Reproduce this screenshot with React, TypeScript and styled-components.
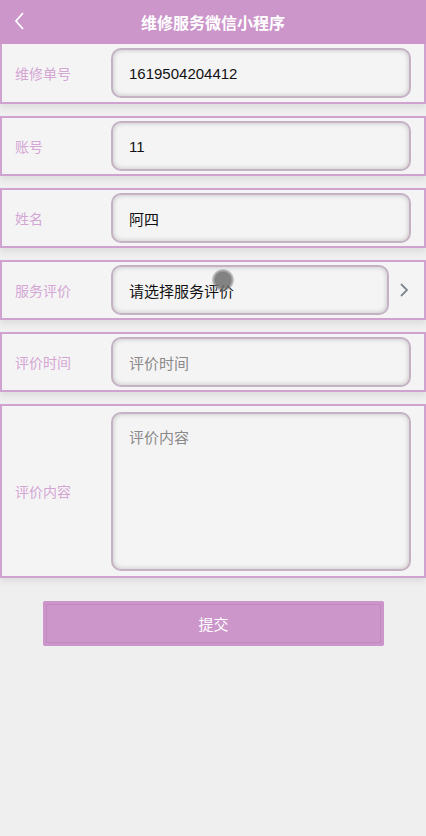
import React from "react";
import styled, { createGlobalStyle } from "styled-components";

const purple = "#cc96cb";
const rowBorder = "#cfa2d0";
const labelColor = "#d4a6d4";

const GlobalStyle = createGlobalStyle`
    html, body {
        margin: 0;
        padding: 0;
        background: #f0eff0;
        font-family: "Liberation Sans", Arial, "Noto Sans CJK SC", sans-serif;
    }
    * {
        box-sizing: border-box;
    }
`;

const Page = styled.div`
    width: 426px;
    min-height: 836px;
    background: #f0eff0;
`;

const Header = styled.div`
    position: relative;
    height: 44px;
    background: ${purple};
    display: flex;
    align-items: center;
    justify-content: center;
    color: #fff;
    font-size: 16px;
    font-weight: bold;
`;

const BackButton = styled.div`
    position: absolute;
    left: 13px;
    top: 11px;
    width: 14px;
    height: 20px;
    display: flex;
`;

const Form = styled.div`
    display: flex;
    flex-direction: column;
    gap: 12px;
`;

const Row = styled.div<{ $tall?: boolean }>`
    display: flex;
    align-items: center;
    height: ${p => (p.$tall ? 174 : 60)}px;
    background: #f5f4f5;
    border: 2px solid ${rowBorder};
    box-shadow: 0 4px 6px rgba(0, 0, 0, 0.07);
    padding: 0 13px 0 13px;
    &:first-child {
        border-top: none;
    }
`;

const Label = styled.div`
    width: 96px;
    flex-shrink: 0;
    font-size: 14px;
    color: ${labelColor};
`;

const Field = styled.div<{ $tall?: boolean; $placeholder?: boolean }>`
    flex: 1;
    height: ${p => (p.$tall ? 159 : 50)}px;
    border: 2px solid #c4b2c4;
    border-radius: 10px;
    background: #f5f4f5;
    box-shadow: inset 0 0 5px rgba(0, 0, 0, 0.22);
    padding: ${p => (p.$tall ? "12px 16px" : "0 16px")};
    display: flex;
    align-items: ${p => (p.$tall ? "flex-start" : "center")};
    font-size: 15px;
    color: ${p => (p.$placeholder ? "#8a8a8a" : "#111")};
`;

const SelectWrap = styled.div`
    flex: 1;
    display: flex;
    align-items: center;
    gap: 8px;
`;

const Arrow = styled.div`
    width: 14px;
    display: flex;
    justify-content: center;
`;

const Dot = styled.span`
    position: relative;
    &::after {
        content: "";
        position: absolute;
        left: -7px;
        top: -21px;
        width: 22px;
        height: 22px;
        border-radius: 50%;
        background: radial-gradient(circle, rgba(110, 110, 110, 0.85) 50%, rgba(150, 150, 150, 0.4) 70%, transparent 75%);
    }
`;

const Footer = styled.div`
    padding: 23px 42px 0 43px;
`;

const SubmitButton = styled.button`
    width: 100%;
    height: 45px;
    border: none;
    border-radius: 3px;
    background: ${purple};
    box-shadow: inset 0 0 0 3px ${purple}, inset 0 0 0 4px #c08ac0;
    color: #fff;
    font-size: 15px;
    font-family: inherit;
`;

export default function App() {
    return (
        <Page>
            <GlobalStyle />
            <Header>
                <BackButton>
                    <svg width="14" height="20" viewBox="0 0 14 20">
                        <path d="M10 2 L3 10 L10 18" fill="none" stroke="#fff" strokeWidth="1.8" />
                    </svg>
                </BackButton>
                维修服务微信小程序
            </Header>
            <Form>
                <Row>
                    <Label>维修单号</Label>
                    <Field>1619504204412</Field>
                </Row>
                <Row>
                    <Label>账号</Label>
                    <Field>11</Field>
                </Row>
                <Row>
                    <Label>姓名</Label>
                    <Field>阿四</Field>
                </Row>
                <Row>
                    <Label>服务评价</Label>
                    <SelectWrap>
                        <Field>
                            请选择服务评<Dot />价
                        </Field>
                        <Arrow>
                            <svg width="10" height="16" viewBox="0 0 10 16">
                                <path d="M2 2 L8 8 L2 14" fill="none" stroke="#7d8790" strokeWidth="1.8" />
                            </svg>
                        </Arrow>
                    </SelectWrap>
                </Row>
                <Row>
                    <Label>评价时间</Label>
                    <Field $placeholder>评价时间</Field>
                </Row>
                <Row $tall>
                    <Label>评价内容</Label>
                    <Field $tall $placeholder>
                        评价内容
                    </Field>
                </Row>
            </Form>
            <Footer>
                <SubmitButton>提交</SubmitButton>
            </Footer>
        </Page>
    );
}
